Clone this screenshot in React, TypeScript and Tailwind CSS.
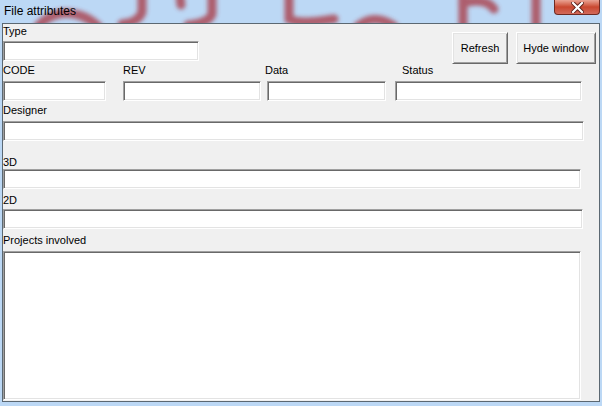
import React from "react";

function Field({ className = "" }: { className?: string }) {
  // sunken classic edit box
  return (
    <div
      className={`border border-t-[#a0a0a0] border-l-[#a0a0a0] border-r-[#ffffff] border-b-[#ffffff] bg-white shadow-[inset_1px_1px_0_#696969,inset_-1px_-1px_0_#e3e3e3] ${className}`}
    />
  );
}

function Label({ children, className = "" }: { children: React.ReactNode; className?: string }) {
  return <div className={`h-[13px] text-[11px] leading-[13px] text-black ${className}`}>{children}</div>;
}

function Button({ children, className = "" }: { children: React.ReactNode; className?: string }) {
  return (
    <button
      className={`flex items-center justify-center border border-t-[#ffffff] border-l-[#ffffff] border-r-[#696969] border-b-[#696969] bg-[#f0f0f0] text-[11px] text-black shadow-[inset_1px_1px_0_#e3e3e3,inset_-1px_-1px_0_#a0a0a0] ${className}`}
    >
      {children}
    </button>
  );
}

export default function App() {
  return (
    <div
      className="relative flex h-[406px] w-[602px] flex-col overflow-hidden bg-[#bcd8f5] px-[2px] pb-[4px]"
      style={{ fontFamily: "'Liberation Sans', Arial, sans-serif" }}
    >
      {/* blurred wallpaper strokes seen through the glass frame */}
      <svg className="pointer-events-none absolute left-0 top-0" width="602" height="24" viewBox="0 0 602 24">
        <defs>
          <filter id="soft" x="-20%" y="-50%" width="140%" height="200%">
            <feGaussianBlur stdDeviation="2.1" />
          </filter>
        </defs>
        <g filter="url(#soft)" stroke="#a8343f" strokeWidth="9" fill="none" strokeLinecap="round" opacity="0.75">
          <path d="M38 26 Q 48 15 64 13 Q 84 13 98 26" />
          <path d="M142 -4 L142 12 Q 139 22 122 24" />
          <path d="M180 -4 L181 5" />
          <path d="M212 -4 L212 14 Q 209 23 188 25" />
          <path d="M289 -4 L289 19 Q 300 25 334 19" />
          <path d="M358 26 Q 374 13 394 26" />
          <path d="M463 -4 L463 26" />
          <path d="M463 3 Q 486 -3 494 9" />
          <path d="M536 -4 L536 26" />
        </g>
      </svg>

      {/* title bar */}
      <div className="relative flex h-[23px] items-start justify-between">
        <div className="pl-[2px] pt-[4px] text-[12px] leading-[15px] text-black">File attributes</div>
        <div className="flex h-[15px] w-[46px] items-center justify-center rounded-b-[4px] border border-t-0 border-[#6e2a22] bg-gradient-to-b from-[#e9a394] via-[#c9472f] to-[#d2695a]">
          <svg width="13" height="11" viewBox="0 0 13 11">
            <path d="M2 1 L11 10 M11 1 L2 10" stroke="#5a1e18" strokeWidth="4" strokeLinecap="square" />
            <path d="M2 1 L11 10 M11 1 L2 10" stroke="#ffffff" strokeWidth="2.2" strokeLinecap="square" />
          </svg>
        </div>
      </div>

      {/* client area */}
      <div className="relative flex flex-1 flex-col border border-[#5b6872] bg-[#f0f0f0]">
        <div className="flex h-[40px] justify-between">
          <div className="pt-[1px]">
            <Label>Type</Label>
            <Field className="mt-[3px] h-[20px] w-[196px]" />
          </div>
          <div className="mr-[3px] mt-[8px] flex gap-[8px]">
            <Button className="h-[32px] w-[56px]">Refresh</Button>
            <Button className="h-[32px] w-[80px]">Hyde window</Button>
          </div>
        </div>

        <div className="flex">
          <div className="w-[103px]">
            <Label>CODE</Label>
            <Field className="mt-[4px] h-[20px] w-[103px]" />
          </div>
          <div className="ml-[17px] w-[138px]">
            <Label>REV</Label>
            <Field className="mt-[4px] h-[20px] w-[138px]" />
          </div>
          <div className="ml-[6px] w-[119px]">
            <Label className="-ml-[2px]">Data</Label>
            <Field className="mt-[4px] h-[20px] w-[119px]" />
          </div>
          <div className="ml-[9px] w-[187px]">
            <Label className="ml-[7px]">Status</Label>
            <Field className="mt-[4px] h-[20px] w-[187px]" />
          </div>
        </div>

        <Label className="mt-[3px]">Designer</Label>
        <Field className="mt-[4px] h-[20px] w-[581px]" />

        <Label className="mt-[15px]">3D</Label>
        <Field className="h-[20px] w-[578px]" />

        <Label className="mt-[5px]">2D</Label>
        <Field className="mt-[2px] h-[20px] w-[580px]" />

        <Label className="mt-[5px]">Projects involved</Label>
        <Field className="mt-[4px] h-[149px] w-[578px]" />
      </div>
    </div>
  );
}
